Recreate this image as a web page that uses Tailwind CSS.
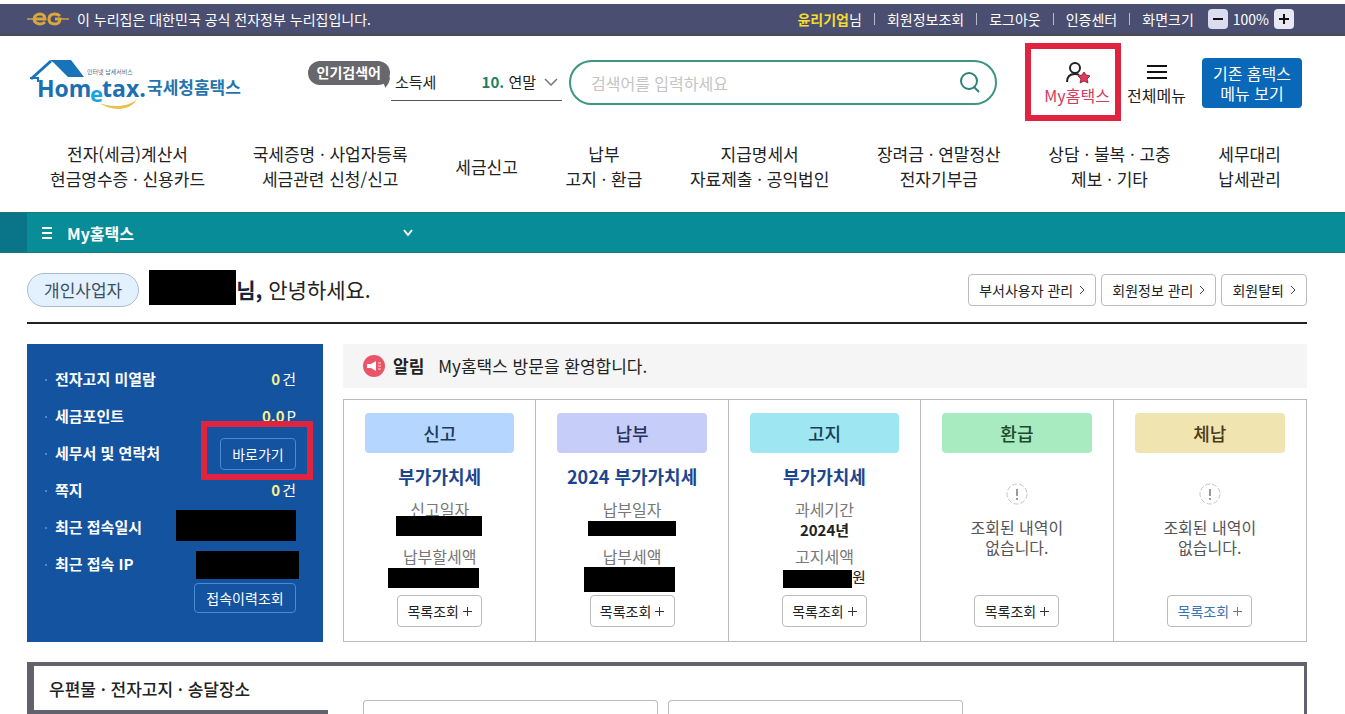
<!DOCTYPE html>
<html lang="ko">
  <head>
    <meta charset="UTF-8" />
    <title>My홈택스 - 국세청 홈택스</title>
    <meta name="viewport" content="width=device-width, initial-scale=1.0" />
    <script src="https://cdn.jsdelivr.net/npm/@tailwindcss/browser@4"></script>
  </head>
  <body class="min-h-screen flex flex-col overflow-x-hidden bg-white text-[#222] font-['Noto_Sans_CJK_KR','Noto_Sans',sans-serif]">
    <!-- Government bar -->
    <div class="mt-1 h-8 flex items-center justify-between pl-[27px] pr-[51px] bg-[#4a4f72] border-b-2 border-[#4a4a4c] text-white text-sm">
      <p class="flex items-center gap-2">
        <svg width="42" height="18" viewBox="0 0 42 18" fill="none" aria-hidden="true">
          <path d="M0 9h8M34 9h8" stroke="#b08a4c" stroke-width="2" />
          <path d="M7 9h11c0-3-2-5-5-5s-6 2-6 5 3 5 6 5c2 0 4-1 5-2" stroke="#d8a63c" stroke-width="3" />
          <path d="M33 6c-1-1-3-2-5-2-4 0-6 2-6 5s2 5 6 5c3 0 5-2 5-5h-5" stroke="#d8a63c" stroke-width="3" />
        </svg>
        이 누리집은 대한민국 공식 전자정부 누리집입니다.
      </p>
      <div class="flex items-center">
        <span><b class="text-[#f5dc32]">윤리기업</b>님</span>
        <i class="w-px h-3 mx-3 bg-[#b9bbcb]"></i>
        <a href="#">회원정보조회</a>
        <i class="w-px h-3 mx-3 bg-[#b9bbcb]"></i>
        <a href="#">로그아웃</a>
        <i class="w-px h-3 mx-3 bg-[#b9bbcb]"></i>
        <a href="#">인증센터</a>
        <i class="w-px h-3 mx-3 bg-[#b9bbcb]"></i>
        <span>화면크기</span>
        <button aria-label="축소" class="ml-[14px] size-5 grid place-items-center rounded-sm bg-[#dcdcf0]">
          <svg width="12" height="12" viewBox="0 0 12 12" stroke="#111" stroke-width="2"><path d="M1 6h10" /></svg>
        </button>
        <span class="mx-[5px]">100%</span>
        <button aria-label="확대" class="size-5 grid place-items-center rounded-sm bg-[#e8e8f4]">
          <svg width="12" height="12" viewBox="0 0 12 12" stroke="#111" stroke-width="2"><path d="M1 6h10M6 1v10" /></svg>
        </button>
      </div>
    </div>

    <!-- Header -->
    <header>
      <div class="h-[93px] flex items-center pl-[27px] pr-[43px]">
        <a href="#" class="shrink-0" aria-label="Hometax 국세청홈택스">
          <svg width="216" height="52" viewBox="0 0 216 52">
            <path d="M23 3h21l13 17H41L27 6z" fill="#1873b8" />
            <path d="M4 22L24 4" stroke="#1873b8" stroke-width="3" fill="none" />
            <path d="M3 21h8v4" stroke="#1873b8" stroke-width="2" fill="none" />
            <text x="60" y="17" font-size="6" fill="#4d6c86" font-family="Noto Sans CJK KR, sans-serif">인터넷 납세서비스</text>
            <g font-family="Open Sans, sans-serif" font-size="23" font-weight="700" fill="#1b70b2">
              <text x="10" y="40">Hom</text>
              <text x="63" y="45" font-size="22" fill="#1aa3dc">e</text>
              <text x="75" y="40">tax.</text>
            </g>
            <path d="M72 46c14 5 30 4 38-4-6 12-24 13-38 4z" fill="#e8c250" />
            <text x="120" y="37" font-size="17" font-weight="700" fill="#2574ad" font-family="Noto Sans CJK KR, sans-serif">국세청홈택스</text>
          </svg>
        </a>

        <!-- Popular keywords -->
        <div class="relative ml-[148px] w-[171px] h-9 shrink-0 flex items-center justify-between pl-1 pr-1 border-b border-[#555] text-[15px]">
          <span class="absolute right-full -top-1 mr-px">
            <span class="block h-6 px-[9px] rounded-full bg-[#68686c] text-white text-sm font-bold leading-[22px] whitespace-nowrap">인기검색어</span>
            <svg class="absolute right-0 top-4" width="14" height="11" viewBox="0 0 14 11" fill="#68686c"><path d="M0 6L14 0c0 4-2 8-5 11 0-2-1-4-2-5z" /></svg>
          </span>
          <span>소득세</span>
          <button class="flex items-center gap-2"><span><b class="text-[#1c7f63]">10.</b> 연말</span>
            <svg width="14" height="8" viewBox="0 0 14 8" fill="none" stroke="#777" stroke-width="1.5"><path d="M1 1l6 6 6-6" /></svg>
          </button>
        </div>

        <form class="relative ml-[7px] flex-1">
          <input type="text" aria-label="검색어" placeholder="검색어를 입력하세요" class="w-full h-[45px] pl-5 pr-14 rounded-full border-2 border-[#3f9680] text-base placeholder:text-[#c4c4c4]" />
          <button type="button" aria-label="검색" class="absolute right-4 top-3">
            <svg width="22" height="22" viewBox="0 0 22 22" fill="none" stroke="#2b8478" stroke-width="2"><circle cx="10" cy="9" r="8" /><path d="M15 15l5 5" /></svg>
          </button>
        </form>

        <div class="ml-[46px] shrink-0 flex items-center gap-4 text-base">
          <a href="#" class="relative w-[68px] flex flex-col items-center leading-[22px] text-[#d43a5c]">
            <svg width="28" height="24" viewBox="0 0 28 24" fill="none">
              <circle cx="12" cy="8" r="5" stroke="#222" stroke-width="2" />
              <path d="M4 22c0-5 3-8 8-8 2 0 3 0 4 1" stroke="#222" stroke-width="2" />
              <path d="M21 12l2 3 4 1-3 3 1 4-4-2-4 2 1-4-3-3 4-1z" fill="#dc3c5e" stroke="#9c2440" />
            </svg>
            My홈택스
            <span class="absolute -left-[18px] -right-[10px] -top-[17px] -bottom-[15px] border-6 border-[#e02440]"></span>
          </a>
          <a href="#" class="flex flex-col items-center leading-[22px]">
            <svg width="22" height="24" viewBox="0 0 22 24" stroke="#111" stroke-width="2"><path d="M1 6h20M1 12h20M1 18h20" /></svg>
            전체메뉴
          </a>
          <button class="w-[100px] h-[50px] rounded bg-[#0a68b8] text-white leading-5">기존 홈택스<br />메뉴 보기</button>
        </div>
      </div>

      <nav class="flex items-center justify-between pt-3 pb-[21px] pl-[50px] pr-[64px] text-center text-[17px] leading-[25px]">
        <a href="#">전자(세금)계산서<br />현금영수증 · 신용카드</a>
        <a href="#">국세증명 · 사업자등록<br />세금관련 신청/신고</a>
        <a href="#">세금신고</a>
        <a href="#">납부<br />고지 · 환급</a>
        <a href="#">지급명세서<br />자료제출 · 공익법인</a>
        <a href="#">장려금 · 연말정산<br />전자기부금</a>
        <a href="#">상담 · 불복 · 고충<br />제보 · 기타</a>
        <a href="#">세무대리<br />납세관리</a>
      </nav>
    </header>

    <!-- Location bar -->
    <div class="h-[41px] flex bg-[#078c98] border-y border-[#1b7a76]">
      <div class="w-[27px] bg-[#0a7488]"></div>
      <button class="w-[400px] flex items-center pl-[15px] pr-[14px] text-white text-base font-bold">
        <svg class="mr-[15px]" width="10" height="12" viewBox="0 0 10 12" stroke="#fff" stroke-width="2"><path d="M0 1h10M0 6h10M0 11h10" /></svg>
        My홈택스
        <svg class="ml-auto" width="10" height="8" viewBox="0 0 10 8" fill="none" stroke="#fff" stroke-width="2"><path d="M1 1l4 5 4-5" /></svg>
      </button>
    </div>

    <main class="flex-1 flex flex-col pl-[27px] pr-[38px]">
      <!-- Greeting -->
      <div class="h-[71px] flex items-center justify-between pt-1 border-b-2 border-[#222]">
        <div class="flex items-center">
          <span class="h-[34px] px-4 flex items-center rounded-full border border-[#a9bdd0] bg-[#e2f1fd] text-[17px] text-[#3d4f63]">개인사업자</span>
          <span class="ml-[10px] mb-1 w-[87px] h-[35px] bg-black"></span>
          <p class="text-[21px]"><b class="text-[#14243a]">님,</b> 안녕하세요.</p>
        </div>
        <div class="flex gap-[5px] text-sm">
          <button class="h-8 px-[10px] flex items-center gap-[6px] rounded-sm border border-[#bbb]">부서사용자 관리
            <svg width="6" height="10" viewBox="0 0 6 10" fill="none" stroke="#444"><path d="M1 1l4 4-4 4" /></svg>
          </button>
          <button class="h-8 px-[10px] flex items-center gap-[6px] rounded-sm border border-[#bbb]">회원정보 관리
            <svg width="6" height="10" viewBox="0 0 6 10" fill="none" stroke="#444"><path d="M1 1l4 4-4 4" /></svg>
          </button>
          <button class="h-8 px-[10px] flex items-center gap-[6px] rounded-sm border border-[#bbb]">회원탈퇴
            <svg width="6" height="10" viewBox="0 0 6 10" fill="none" stroke="#444"><path d="M1 1l4 4-4 4" /></svg>
          </button>
        </div>
      </div>

      <div class="mt-5 flex gap-5">
        <!-- My info -->
        <aside class="w-[296px] shrink-0 pt-[17px] pl-[18px] pr-[27px] bg-[#14539f] text-white text-[15px]">
          <ul>
            <li class="h-[37px] flex items-center">
              <i class="mr-2 size-[2px] bg-[#4f86c8]"></i><b>전자고지 미열람</b>
              <span class="ml-auto flex gap-[2px]"><b class="text-[#f4f08a]">0</b>건</span>
            </li>
            <li class="h-[37px] flex items-center">
              <i class="mr-2 size-[2px] bg-[#4f86c8]"></i><b>세금포인트</b>
              <span class="ml-auto flex gap-[2px]"><b class="text-[#f4f08a]">0.0</b>P</span>
            </li>
            <li class="relative h-[37px] flex items-center">
              <i class="mr-2 size-[2px] bg-[#4f86c8]"></i><b>세무서 및 연락처</b>
              <button class="ml-auto w-[76px] h-8 rounded-sm border border-[#4a8ad0] text-sm">바로가기</button>
              <span class="absolute -right-[17px] -top-[14px] w-[112px] h-[59px] border-6 border-[#e02440]"></span>
            </li>
            <li class="h-[37px] flex items-center">
              <i class="mr-2 size-[2px] bg-[#4f86c8]"></i><b>쪽지</b>
              <span class="ml-auto flex gap-[2px]"><b class="text-[#f4f08a]">0</b>건</span>
            </li>
            <li class="h-[37px] flex items-center">
              <i class="mr-2 size-[2px] bg-[#4f86c8]"></i><b>최근 접속일시</b>
              <span class="ml-auto mb-1 w-[120px] h-[31px] bg-black"></span>
            </li>
            <li class="h-[37px] flex items-center">
              <i class="mr-2 size-[2px] bg-[#4f86c8]"></i><b>최근 접속 IP</b>
              <span class="ml-auto -mr-[3px] w-[103px] h-7 bg-black"></span>
            </li>
          </ul>
          <button class="block ml-auto w-[102px] h-[30px] rounded-sm border border-[#4a8ad0] text-sm">접속이력조회</button>
        </aside>

        <div class="flex-1">
          <!-- Notice -->
          <div class="h-11 flex items-center pl-5 bg-[#f5f5f5]">
            <svg width="22" height="22" viewBox="0 0 22 22">
              <circle cx="11" cy="11" r="11" fill="#ea5468" />
              <path d="M4 9h4l5-3v10l-5-3H4z" fill="#fff" />
              <path d="M15 8h3M15 11h3M15 14h3" stroke="#ffd9c4" stroke-width="1" />
            </svg>
            <b class="ml-2 text-[17px]">알림</b>
            <p class="ml-[14px] text-[17px]">My홈택스 방문을 환영합니다.</p>
          </div>

          <!-- Status cards -->
          <div class="mt-[11px] h-[243px] grid grid-cols-5 divide-x divide-[#bbb] border border-[#bbb] text-center text-base">
            <section class="flex flex-col items-center px-[21px] pt-[13px] pb-[14px]">
              <h3 class="w-full h-10 rounded-sm bg-[#b5d6ff] text-lg leading-10 font-medium text-[#1c3a5c]">신고</h3>
              <p class="mt-[11px] text-lg leading-6 font-bold text-[#1c4590]">부가가치세</p>
              <p class="mt-[10px] leading-[22px] text-[#777]">신고일자</p>
              <p class="relative w-full h-5"><span class="absolute left-[31px] -top-1 w-[86px] h-5 bg-black"></span></p>
              <p class="mt-[5px] leading-[22px] text-[#777]">납부할세액</p>
              <p class="relative w-full h-5"><span class="absolute left-[23px] top-px w-[91px] h-5 bg-black"></span></p>
              <button class="mt-auto w-[85px] h-8 flex items-center justify-center gap-1 rounded-sm border border-[#bbb] text-sm">목록조회
                <svg width="9" height="9" viewBox="0 0 9 9" stroke="#333"><path d="M0 4.5h9M4.5 0v9" /></svg>
              </button>
            </section>

            <section class="flex flex-col items-center px-[21px] pt-[13px] pb-[14px]">
              <h3 class="w-full h-10 rounded-sm bg-[#c5cdf8] text-lg leading-10 font-medium text-[#26335e]">납부</h3>
              <p class="mt-[11px] text-lg leading-6 font-bold text-[#1c4590]">2024 부가가치세</p>
              <p class="mt-[10px] leading-[22px] text-[#777]">납부일자</p>
              <p class="relative w-full h-5"><span class="absolute left-[31px] top-px w-[88px] h-[15px] bg-black"></span></p>
              <p class="mt-[5px] leading-[22px] text-[#777]">납부세액</p>
              <p class="relative w-full h-5"><span class="absolute left-[27px] top-0 w-[91px] h-[25px] bg-black"></span></p>
              <button class="mt-auto w-[85px] h-8 flex items-center justify-center gap-1 rounded-sm border border-[#bbb] text-sm">목록조회
                <svg width="9" height="9" viewBox="0 0 9 9" stroke="#333"><path d="M0 4.5h9M4.5 0v9" /></svg>
              </button>
            </section>

            <section class="flex flex-col items-center px-[21px] pt-[13px] pb-[14px]">
              <h3 class="w-full h-10 rounded-sm bg-[#9ee6f2] text-lg leading-10 font-medium text-[#1b3d58]">고지</h3>
              <p class="mt-[11px] text-lg leading-6 font-bold text-[#1c4590]">부가가치세</p>
              <p class="mt-[10px] leading-[22px] text-[#777]">과세기간</p>
              <p class="text-[15px] leading-5 font-bold">2024년</p>
              <p class="mt-[5px] leading-[22px] text-[#777]">고지세액</p>
              <p class="h-5 flex items-center text-[15px] leading-5"><span class="mt-1 w-[69px] h-[18px] bg-black"></span>원</p>
              <button class="mt-auto w-[85px] h-8 flex items-center justify-center gap-1 rounded-sm border border-[#bbb] text-sm">목록조회
                <svg width="9" height="9" viewBox="0 0 9 9" stroke="#333"><path d="M0 4.5h9M4.5 0v9" /></svg>
              </button>
            </section>

            <section class="flex flex-col items-center px-[21px] pt-[13px] pb-[14px]">
              <h3 class="w-full h-10 rounded-sm bg-[#a9ebc0] text-lg leading-10 font-medium text-[#1d4a2c]">환급</h3>
              <svg class="mt-[30px]" width="22" height="22" viewBox="0 0 22 22" fill="none">
                <circle cx="11" cy="11" r="10" stroke="#c4c4c4" stroke-dasharray="5 2" />
                <path d="M11 6v7M11 15v2" stroke="#999" stroke-width="2" />
              </svg>
              <p class="mt-3 leading-5 text-[#555]">조회된 내역이<br />없습니다.</p>
              <button class="mt-auto w-[85px] h-8 flex items-center justify-center gap-1 rounded-sm border border-[#bbb] text-sm">목록조회
                <svg width="9" height="9" viewBox="0 0 9 9" stroke="#333"><path d="M0 4.5h9M4.5 0v9" /></svg>
              </button>
            </section>

            <section class="flex flex-col items-center px-[21px] pt-[13px] pb-[14px]">
              <h3 class="w-full h-10 rounded-sm bg-[#f0e5b0] text-lg leading-10 font-medium text-[#4a3a1c]">체납</h3>
              <svg class="mt-[30px]" width="22" height="22" viewBox="0 0 22 22" fill="none">
                <circle cx="11" cy="11" r="10" stroke="#c4c4c4" stroke-dasharray="5 2" />
                <path d="M11 6v7M11 15v2" stroke="#999" stroke-width="2" />
              </svg>
              <p class="mt-3 leading-5 text-[#555]">조회된 내역이<br />없습니다.</p>
              <button class="mt-auto w-[85px] h-8 flex items-center justify-center gap-1 rounded-sm border border-[#bbb] text-sm text-[#3a74b8]">목록조회
                <svg width="9" height="9" viewBox="0 0 9 9" stroke="#777"><path d="M0 4.5h9M4.5 0v9" /></svg>
              </button>
            </section>
          </div>
        </div>
      </div>

      <!-- Mail and delivery address -->
      <section class="mt-5 flex-1 flex border-t-4 border-l-7 border-r-3 border-[#62626c]">
        <h2 class="w-[294px] h-12 pl-[15px] border-b-4 border-[#62626c] text-[17px] leading-[46px] font-medium">우편물 · 전자고지 · 송달장소</h2>
        <div class="ml-[35px] mt-[34px] flex gap-[10px]">
          <div class="w-[295px] rounded-t-sm border border-b-0 border-[#bbb]"></div>
          <div class="w-[295px] rounded-t-sm border border-b-0 border-[#bbb]"></div>
        </div>
      </section>
    </main>
  </body>
</html>
